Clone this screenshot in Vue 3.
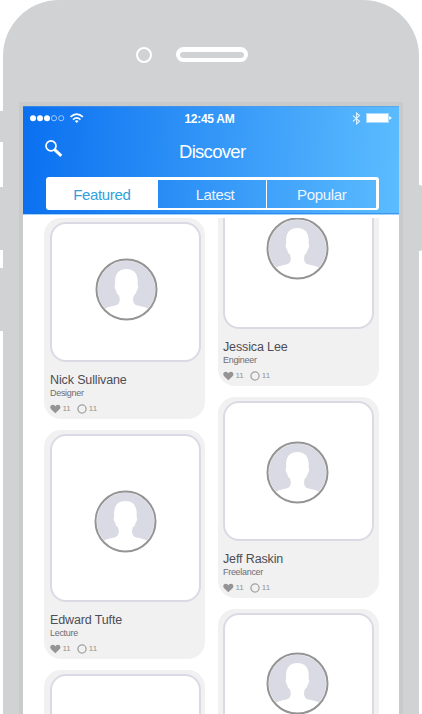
<script setup>
const tabs = ['Featured', 'Latest', 'Popular']
const columns = [
  {
    side: 'left',
    cards: [
      { id: 1, name: 'Nick Sullivane', role: 'Designer', height: 140, avatarTop: 34, shift: 1 },
      { id: 2, name: 'Edward Tufte', role: 'Lecture', height: 168, avatarTop: 53.5, shift: 0 },
      { id: 3, height: 168, avatarTop: 53.5, shift: 0 }
    ]
  },
  {
    side: 'right',
    cards: [
      { id: 4, name: 'Jessica Lee', role: 'Engineer', height: 160, avatarTop: 46, shift: -1 },
      { id: 5, name: 'Jeff Raskin', role: 'Freelancer', height: 140, avatarTop: 37.5, shift: -1 },
      { id: 6, height: 140, avatarTop: 37, shift: -1 }
    ]
  }
]
</script>

<template>
  <div class="stage">
    <i class="key mute"></i>
    <i class="key volume-up"></i>
    <i class="key volume-down"></i>
    <i class="key power"></i>
    <div class="phone">
      <div class="speaker-row">
        <span class="camera"></span>
        <span class="speaker"></span>
      </div>
      <div class="bezel">
        <div class="screen">
          <header class="header">
            <div class="status">
              <svg class="signal" width="56" height="12" viewBox="0 0 56 12">
                <g fill="#fff">
                  <circle cx="3" cy="5.2" r="3" /><circle cx="10" cy="5.2" r="3" /><circle cx="17" cy="5.2" r="3" />
                </g>
                <g fill="none" stroke="#9fc9fc" stroke-width="1">
                  <circle cx="24" cy="5.2" r="2.6" /><circle cx="31.2" cy="5.2" r="2.6" />
                </g>
                <g fill="none" stroke="#fff" stroke-width="1.7">
                  <path d="M40.5 3.8Q46.7 -1.7 52.9 3.8" />
                  <path d="M43 6.6Q46.7 3.3 50.4 6.6" />
                </g>
                <path d="M44.8 8Q46.7 6.7 48.6 8L46.7 10Z" fill="#fff" />
              </svg>
              <span class="time">12:45 AM</span>
              <svg class="power-icons" width="40" height="14" viewBox="0 0 40 14">
                <path d="M1 3.7L7.5 9.3L4.6 11.8V1.1L7.5 3.6L1 9.4" fill="none" stroke="#e8f5ff" stroke-width="1.1" />
                <rect x="14.5" y="1.5" width="22" height="9" fill="#fff" stroke="#a9dafe" />
                <path d="M37.2 4L39.8 6L37.2 8Z" fill="#fff" />
              </svg>
            </div>
            <div class="title-row">
              <svg class="search" width="18" height="18" viewBox="0 0 18 18">
                <circle cx="6" cy="5.9" r="5" fill="none" stroke="#fff" stroke-width="1.7" />
                <path d="M9.4 9.3L16.3 15.8" stroke="#fff" stroke-width="3" />
              </svg>
              <h1 class="title">Discover</h1>
            </div>
            <nav class="tabs">
              <span v-for="(tab, i) in tabs" :key="tab" class="tab" :class="{ active: i === 0, middle: i === 1 }"><b>{{ tab }}</b></span>
            </nav>
          </header>
          <main class="feed">
            <div v-for="col in columns" :key="col.side" class="column" :class="col.side">
              <article v-for="card in col.cards" :key="card.id" class="card">
                <div class="frame" :style="{ height: card.height + 'px', paddingTop: card.avatarTop + 'px', paddingLeft: 42.5 + card.shift + 'px' }">
                  <svg class="avatar" width="63" height="63" viewBox="0 0 63 63">
                    <circle cx="31.5" cy="31.5" r="28.7" fill="#dadae4" />
                    <path d="M9.5 51C13 48.6 17 48.6 20.5 47.6C25.5 46.2 25.3 41.5 24 37.5C22.3 36.3 21.3 34.5 21.2 32.7C19.6 31 19.2 28 20.2 26.8C19.2 15.5 24 11 31.4 11C38.8 11 43.6 15.5 42.6 26.8C43.6 28 43.2 31 41.6 32.7C41.5 34.5 40.5 36.3 38.8 37.5C37.5 41.5 37.5 46.2 42.3 47.6C45.8 48.6 50 48.6 53.5 51A29 29 0 0 1 9.5 51Z" fill="#fff" />
                    <circle cx="31.5" cy="31.5" r="30" fill="none" stroke="#949494" stroke-width="2" />
                  </svg>
                </div>
                <template v-if="card.name">
                  <h2 class="name">{{ card.name }}</h2>
                  <p class="role">{{ card.role }}</p>
                  <div class="stats">
                    <svg width="11" height="10" viewBox="0 0 11 10">
                      <path d="M5.3 9.3L.9 5C-.6 2.8.7.8 2.7.8C4 .8 5 1.5 5.3 2.5C5.6 1.5 6.7.8 8 .8C10 .8 11.2 2.8 9.8 5Z" fill="#949494" />
                    </svg>
                    <span class="likes">11</span>
                    <svg width="10" height="10" viewBox="0 0 10 10">
                      <circle cx="5" cy="5" r="4.1" fill="none" stroke="#a3a3a3" stroke-width="1.3" />
                    </svg>
                    <span>11</span>
                  </div>
                </template>
              </article>
            </div>
          </main>
        </div>
      </div>
    </div>
  </div>
</template>

<style>
body {
  background: #fff;
}
</style>

<style scoped>
.stage {
  position: relative;
  width: 422px;
  height: 714px;
  overflow: hidden;
  font-family: "Liberation Sans", Arial, sans-serif;
}
.phone {
  width: 415.5px;
  height: 714px;
  margin-left: 3px;
  box-sizing: border-box;
  padding: 0 16px;
  background: #d1d2d4;
  border-radius: 56px 56px 0 0;
}
.key {
  position: absolute;
  left: -4px;
  width: 10px;
  background: #d1d2d4;
  border-radius: 2px;
}
.mute { top: 111px; height: 31px; }
.volume-up { top: 187px; height: 63px; }
.volume-down { top: 268px; height: 63px; }
.power { top: 185px; left: 414px; width: 7.5px; height: 66px; }
.speaker-row {
  height: 102px;
  display: flex;
  gap: 24px;
  padding: 47px 0 0 117px;
  box-sizing: border-box;
}
.camera {
  width: 16px;
  height: 16px;
  box-sizing: border-box;
  border: 2px solid #fff;
  border-radius: 50%;
}
.speaker {
  width: 72px;
  height: 15px;
  box-sizing: border-box;
  border: 4px solid #fff;
  border-top-width: 5px;
  border-radius: 8px;
}
.bezel {
  width: 384px;
  height: 612px;
  padding: 4px 4px 0;
  box-sizing: border-box;
  background: #c9caca;
}
.screen {
  height: 608px;
  background: #fff;
  display: flex;
  flex-direction: column;
}
.header {
  flex: none;
  height: 109px;
  box-sizing: border-box;
  background: linear-gradient(92deg, #0a70f0, #5cbcff);
  border-top: 1px solid rgba(90, 150, 220, .55);
  border-bottom: 1px solid #a3d3fc;
  box-shadow: inset 0 -1px 0 rgba(20, 110, 220, .45);
  color: #fff;
}
.status {
  height: 24px;
  display: flex;
  align-items: center;
  padding: 0 7px;
}
.signal, .power-icons { display: block; flex: none; }
.time {
  width: 52px;
  margin-left: 98.5px;
  font-size: 12px;
  font-weight: 700;
  letter-spacing: -.3px;
  white-space: nowrap;
}
.power-icons { margin-left: auto; }
.title-row {
  height: 46px;
  display: flex;
  align-items: flex-start;
}
.search { margin: 9px 0 0 22px; }
.title {
  margin: 10px 0 0 116px;
  font-size: 18.5px;
  line-height: 21px;
  font-weight: 400;
  letter-spacing: -.7px;
}
.tabs {
  width: 333px;
  height: 33px;
  margin-left: 23px;
  box-sizing: border-box;
  border: 2px solid #fff;
  border-top-width: 3px;
  border-right-width: 3px;
  border-radius: 3px;
  display: flex;
}
.tab {
  flex: 1;
  display: flex;
  align-items: center;
  justify-content: center;
  padding-top: 1px;
  font-size: 15px;
  letter-spacing: -.35px;
}
.tab b { font-weight: 400; }
.tab + .tab { border-left: 1.5px solid #fff; }
.tab + .tab b { opacity: .9; }
.tab.active { background: #fff; color: #2fa2dc; }
.tab.active b { padding-right: 1px; }
.tab.middle b { padding-left: 6px; }
.feed {
  flex: 1;
  min-height: 0;
  margin-top: 3px;
  padding-left: 21px;
  display: flex;
  gap: 13px;
  overflow: hidden;
}
.column {
  width: 161px;
  flex: none;
}
.column.right { margin-top: -53px; }
.card {
  box-sizing: border-box;
  margin-bottom: 11px;
  padding: 4px 4.5px 0 5.5px;
  border-radius: 17px;
  background: #f1f1f1;
  overflow: hidden;
}
.right .card { padding: 4px 5.5px 0 4.5px; }
.frame {
  box-sizing: border-box;
  border: 2px solid #dadae5;
  border-radius: 16px;
  background: #fff;
}
.avatar { display: block; }
.name {
  margin: 10px 0 0 .5px;
  font-size: 12.5px;
  line-height: 16px;
  font-weight: 400;
  letter-spacing: -.13px;
  color: #4d4d55;
}
.role {
  margin: 0 0 0 .5px;
  font-size: 9px;
  line-height: 10px;
  letter-spacing: -.3px;
  color: #6d6d75;
}
.stats {
  height: 21px;
  box-sizing: border-box;
  padding: 6px 0 5px;
  display: flex;
  align-items: center;
  font-size: 8px;
  line-height: 10px;
  color: #949494;
}
.stats svg { display: block; flex: none; }
.stats span { margin-left: 2px; }
.stats .likes { margin-right: 6px; }
</style>
